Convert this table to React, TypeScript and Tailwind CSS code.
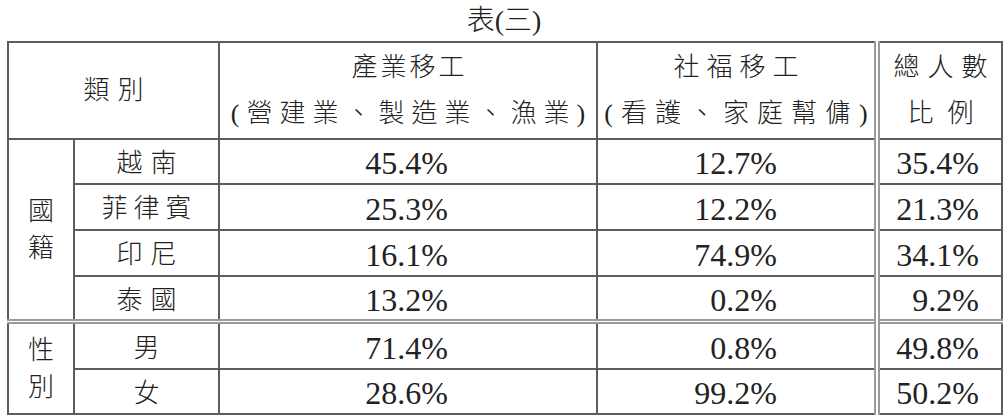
import React from 'react';

const line = 'border-2 border-[#5c5c5c] p-0 text-center align-middle whitespace-nowrap';
const dbl = '[border-left-style:double] border-l-[6px] border-l-[#9a9a9a]';
const dblTop = '[border-top-style:double] border-t-[5px] border-t-[#9a9a9a]';

type Row = { name: string; track: string; a: string; b: string; c: string };

const nationality: Row[] = [
  { name: '越南', track: 'tracking-[8px] mr-[-8px]', a: '45.4%', b: '12.7%', c: '35.4%' },
  { name: '菲律賓', track: 'tracking-[6px] mr-[-6px]', a: '25.3%', b: '12.2%', c: '21.3%' },
  { name: '印尼', track: 'tracking-[8px] mr-[-8px]', a: '16.1%', b: '74.9%', c: '34.1%' },
  { name: '泰國', track: 'tracking-[8px] mr-[-8px]', a: '13.2%', b: '0.2%', c: '9.2%' },
];

const gender: Row[] = [
  { name: '男', track: '', a: '71.4%', b: '0.8%', c: '49.8%' },
  { name: '女', track: '', a: '28.6%', b: '99.2%', c: '50.2%' },
];

const Numbers: React.FC<{ row: Row; top?: boolean }> = ({ row, top }) => (
  <>
    <td className={`${line} ${top ? dblTop : ''} pt-[4px]`}>
      <div className={row.track}>{row.name}</div>
    </td>
    <td className={`${line} ${top ? dblTop : ''} text-[32px] !text-right pr-[148px] pt-[4px]`}>{row.a}</td>
    <td className={`${line} ${top ? dblTop : ''} text-[32px] !text-right pr-[97px] pt-[4px]`}>{row.b}</td>
    <td className={`${line} ${dbl} ${top ? dblTop : ''} text-[32px] !text-right pr-[22px] pt-[4px]`}>{row.c}</td>
  </>
);

const App: React.FC = () => {
  return (
    <div className="w-[1008px] h-[418px] bg-white text-[#222] font-light font-['Liberation_Serif','Noto_Sans_CJK_TC',serif] overflow-hidden">
      {/* Title */}
      <div className="h-[41px] flex items-center justify-center text-[28px] leading-none">表(三)</div>

      <table className="table-fixed border-collapse w-[996px] ml-[7px] text-[26px] leading-[1.2]">
        <colgroup>
          <col className="w-[66px]" />
          <col className="w-[145px]" />
          <col className="w-[378px]" />
          <col className="w-[280px]" />
          <col className="w-[125px]" />
        </colgroup>
        <thead>
          <tr className="h-[97px]">
            <th colSpan={2} className={`${line} font-light`}>
              <div className="tracking-[8px] mr-[-8px]">類別</div>
            </th>
            <th className={`${line} font-light leading-[46px]`}>
              <div className="tracking-[3px] mr-[-3px]">產業移工</div>
              <div className="tracking-[7px] mr-[-7px]">(營建業、製造業、漁業)</div>
            </th>
            <th className={`${line} font-light leading-[46px]`}>
              <div className="tracking-[7px] mr-[-7px]">社福移工</div>
              <div className="tracking-[8px] mr-[-8px]">(看護、家庭幫傭)</div>
            </th>
            <th className={`${line} ${dbl} font-light leading-[46px]`}>
              <div className="tracking-[8px] mr-[-8px]">總人數</div>
              <div className="tracking-[14px] mr-[-14px]">比例</div>
            </th>
          </tr>
        </thead>
        <tbody>
          {nationality.map((row, i) => (
            <tr key={row.name} className={i === 3 ? 'h-[45px]' : i === 0 ? 'h-[45px]' : 'h-[46px]'}>
              {i === 0 && (
                <td rowSpan={4} className={`${line} leading-[37px]`}>
                  國<br />籍
                </td>
              )}
              <Numbers row={row} />
            </tr>
          ))}
          {gender.map((row, i) => (
            <tr key={row.name} className={i === 0 ? 'h-[47px]' : 'h-[45px]'}>
              {i === 0 && (
                <td rowSpan={2} className={`${line} ${dblTop} leading-[37px]`}>
                  性<br />別
                </td>
              )}
              <Numbers row={row} top={i === 0} />
            </tr>
          ))}
        </tbody>
      </table>
    </div>
  );
};

export default App;
